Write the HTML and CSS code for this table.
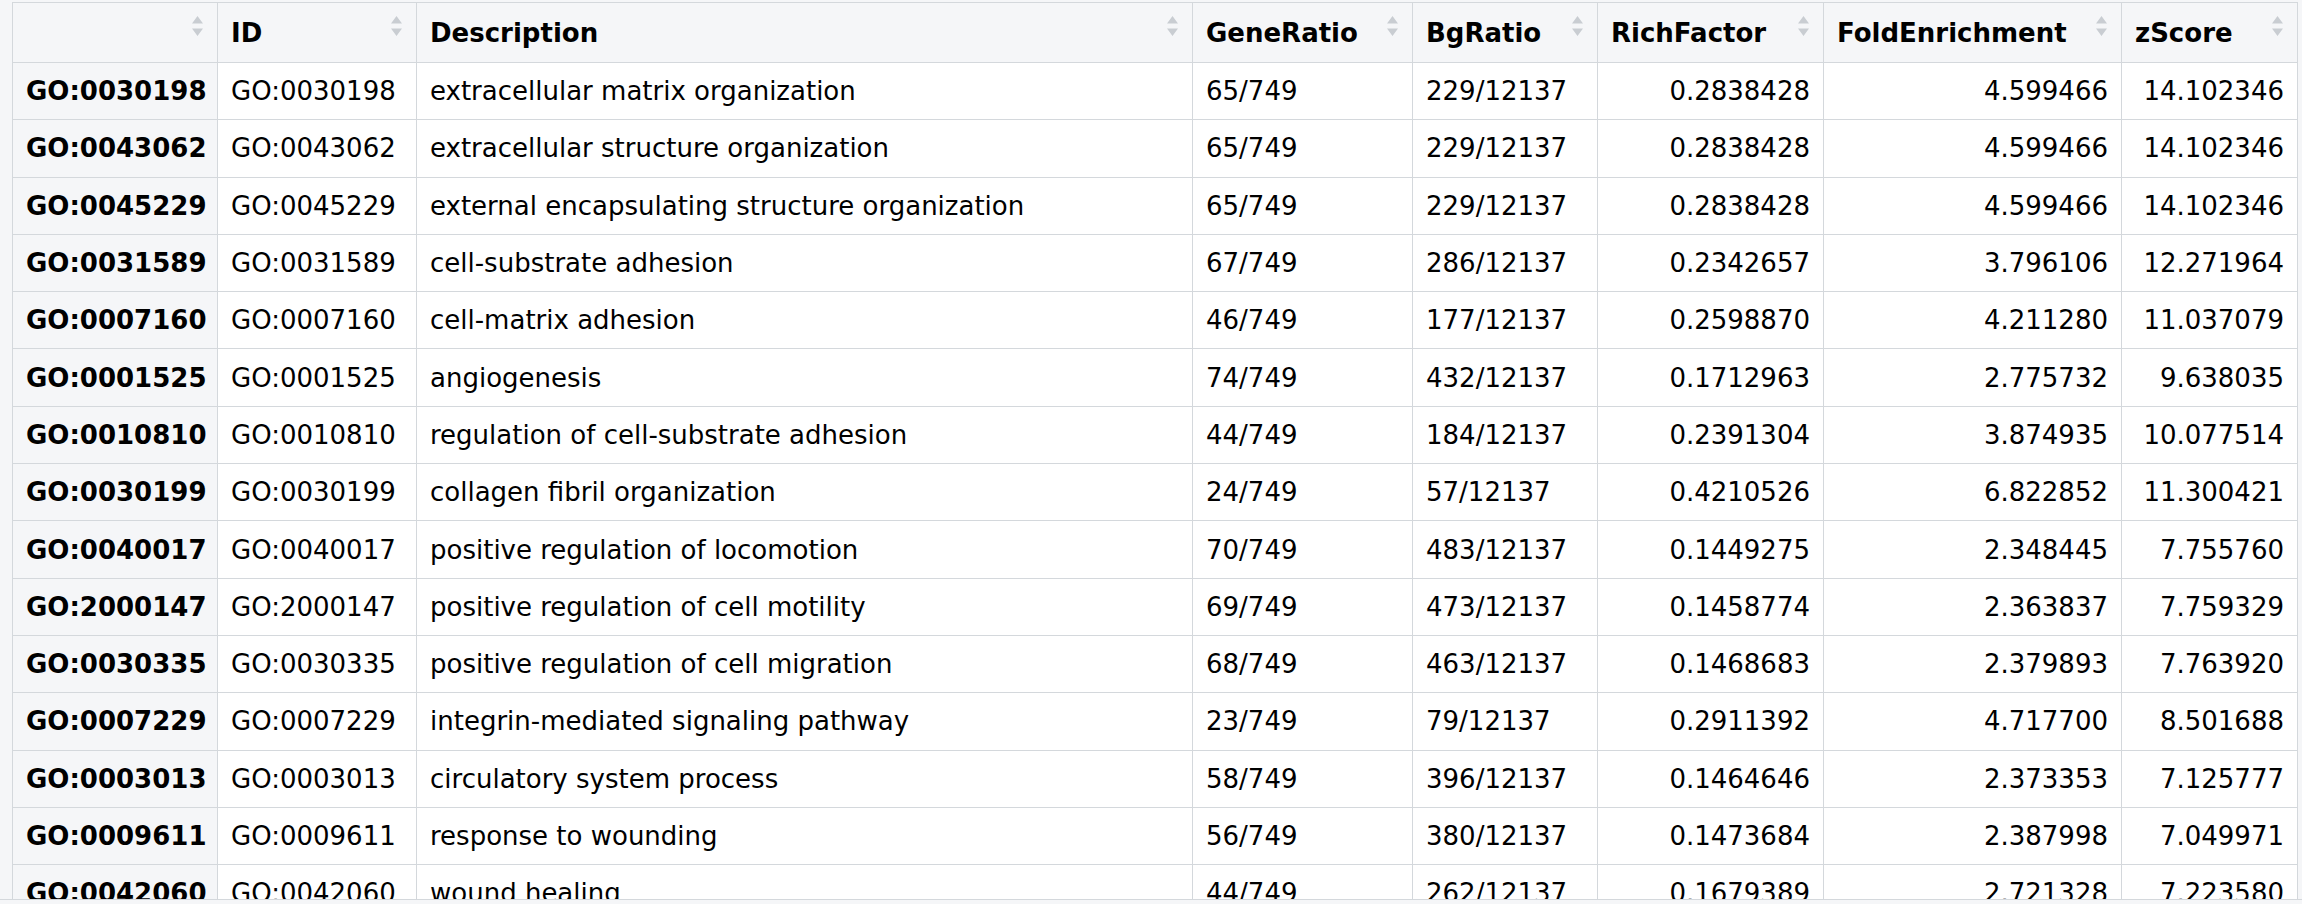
FILE: index.html
```html
<!DOCTYPE html>
<html>
<head>
<meta charset="utf-8">
<title>GO enrichment</title>
<link rel="stylesheet" href="styles.css">
</head>
<body>
<div class="viewer">
  <table class="grid">
    <thead>
      <tr>
        <th class="c-rn"><span class="sort"><svg viewBox="0 0 11 20" width="11" height="20"><path d="M0 7.5 L5.5 0 L11 7.5 Z M0 12.5 L5.5 20 L11 12.5 Z"/></svg></span></th>
        <th class="c-id">ID<span class="sort"><svg viewBox="0 0 11 20" width="11" height="20"><path d="M0 7.5 L5.5 0 L11 7.5 Z M0 12.5 L5.5 20 L11 12.5 Z"/></svg></span></th>
        <th class="c-desc">Description<span class="sort"><svg viewBox="0 0 11 20" width="11" height="20"><path d="M0 7.5 L5.5 0 L11 7.5 Z M0 12.5 L5.5 20 L11 12.5 Z"/></svg></span></th>
        <th class="c-gr">GeneRatio<span class="sort"><svg viewBox="0 0 11 20" width="11" height="20"><path d="M0 7.5 L5.5 0 L11 7.5 Z M0 12.5 L5.5 20 L11 12.5 Z"/></svg></span></th>
        <th class="c-bg">BgRatio<span class="sort"><svg viewBox="0 0 11 20" width="11" height="20"><path d="M0 7.5 L5.5 0 L11 7.5 Z M0 12.5 L5.5 20 L11 12.5 Z"/></svg></span></th>
        <th class="c-rf">RichFactor<span class="sort"><svg viewBox="0 0 11 20" width="11" height="20"><path d="M0 7.5 L5.5 0 L11 7.5 Z M0 12.5 L5.5 20 L11 12.5 Z"/></svg></span></th>
        <th class="c-fe">FoldEnrichment<span class="sort"><svg viewBox="0 0 11 20" width="11" height="20"><path d="M0 7.5 L5.5 0 L11 7.5 Z M0 12.5 L5.5 20 L11 12.5 Z"/></svg></span></th>
        <th class="c-z">zScore<span class="sort"><svg viewBox="0 0 11 20" width="11" height="20"><path d="M0 7.5 L5.5 0 L11 7.5 Z M0 12.5 L5.5 20 L11 12.5 Z"/></svg></span></th>
      </tr>
    </thead>
    <tbody>
      <tr><th class="rn">GO:0030198</th><td>GO:0030198</td><td>extracellular matrix organization</td><td>65/749</td><td>229/12137</td><td class="num">0.2838428</td><td class="num">4.599466</td><td class="num">14.102346</td></tr>
      <tr><th class="rn">GO:0043062</th><td>GO:0043062</td><td>extracellular structure organization</td><td>65/749</td><td>229/12137</td><td class="num">0.2838428</td><td class="num">4.599466</td><td class="num">14.102346</td></tr>
      <tr><th class="rn">GO:0045229</th><td>GO:0045229</td><td>external encapsulating structure organization</td><td>65/749</td><td>229/12137</td><td class="num">0.2838428</td><td class="num">4.599466</td><td class="num">14.102346</td></tr>
      <tr><th class="rn">GO:0031589</th><td>GO:0031589</td><td>cell-substrate adhesion</td><td>67/749</td><td>286/12137</td><td class="num">0.2342657</td><td class="num">3.796106</td><td class="num">12.271964</td></tr>
      <tr><th class="rn">GO:0007160</th><td>GO:0007160</td><td>cell-matrix adhesion</td><td>46/749</td><td>177/12137</td><td class="num">0.2598870</td><td class="num">4.211280</td><td class="num">11.037079</td></tr>
      <tr><th class="rn">GO:0001525</th><td>GO:0001525</td><td>angiogenesis</td><td>74/749</td><td>432/12137</td><td class="num">0.1712963</td><td class="num">2.775732</td><td class="num">9.638035</td></tr>
      <tr><th class="rn">GO:0010810</th><td>GO:0010810</td><td>regulation of cell-substrate adhesion</td><td>44/749</td><td>184/12137</td><td class="num">0.2391304</td><td class="num">3.874935</td><td class="num">10.077514</td></tr>
      <tr><th class="rn">GO:0030199</th><td>GO:0030199</td><td>collagen fibril organization</td><td>24/749</td><td>57/12137</td><td class="num">0.4210526</td><td class="num">6.822852</td><td class="num">11.300421</td></tr>
      <tr><th class="rn">GO:0040017</th><td>GO:0040017</td><td>positive regulation of locomotion</td><td>70/749</td><td>483/12137</td><td class="num">0.1449275</td><td class="num">2.348445</td><td class="num">7.755760</td></tr>
      <tr><th class="rn">GO:2000147</th><td>GO:2000147</td><td>positive regulation of cell motility</td><td>69/749</td><td>473/12137</td><td class="num">0.1458774</td><td class="num">2.363837</td><td class="num">7.759329</td></tr>
      <tr><th class="rn">GO:0030335</th><td>GO:0030335</td><td>positive regulation of cell migration</td><td>68/749</td><td>463/12137</td><td class="num">0.1468683</td><td class="num">2.379893</td><td class="num">7.763920</td></tr>
      <tr><th class="rn">GO:0007229</th><td>GO:0007229</td><td>integrin-mediated signaling pathway</td><td>23/749</td><td>79/12137</td><td class="num">0.2911392</td><td class="num">4.717700</td><td class="num">8.501688</td></tr>
      <tr><th class="rn">GO:0003013</th><td>GO:0003013</td><td>circulatory system process</td><td>58/749</td><td>396/12137</td><td class="num">0.1464646</td><td class="num">2.373353</td><td class="num">7.125777</td></tr>
      <tr><th class="rn">GO:0009611</th><td>GO:0009611</td><td>response to wounding</td><td>56/749</td><td>380/12137</td><td class="num">0.1473684</td><td class="num">2.387998</td><td class="num">7.049971</td></tr>
      <tr><th class="rn">GO:0042060</th><td>GO:0042060</td><td>wound healing</td><td>44/749</td><td>262/12137</td><td class="num">0.1679389</td><td class="num">2.721328</td><td class="num">7.223580</td></tr>
    </tbody>
  </table>
</div>
</body>
</html>
```

FILE: styles.css
```css
html, body {
  margin: 0;
  padding: 0;
  background: #f5f6f8;
}

body {
  font-family: "DejaVu Sans", "Liberation Sans", sans-serif;
  font-size: 26px;
  color: #000;
  height: 904px;
  overflow: hidden;
}

.viewer {
  height: 900px;
  overflow: hidden;
  border-bottom: 1px solid #d4d8dc;
  padding: 2px 0 0 12px;
  box-sizing: border-box;
}

.grid {
  border-collapse: separate;
  border-spacing: 0;
  table-layout: fixed;
  width: 2286px;
  border-left: 1px solid #d4d8dc;
  border-top: 1px solid #d4d8dc;
  background: #fff;
}

.grid th,
.grid td {
  box-sizing: border-box;
  border-right: 1px solid #d4d8dc;
  border-bottom: 1px solid #d4d8dc;
  padding: 0 13px;
  white-space: nowrap;
  overflow: hidden;
  text-align: left;
  vertical-align: middle;
}

.grid thead th {
  position: relative;
  height: 60px;
  background: #f5f6f8;
  font-weight: bold;
  padding-right: 34px;
}

.grid tbody td,
.grid tbody th {
  height: 57.3px;
  font-weight: normal;
}

.grid tbody th.rn {
  background: #f5f6f8;
  font-weight: bold;
}

.grid td.num {
  text-align: right;
}

.sort {
  position: absolute;
  right: 14px;
  top: 13px;
  width: 11px;
  height: 20px;
  display: block;
}

.sort svg {
  display: block;
  fill: #c9cdd2;
}

.c-rn { width: 205px; }
.c-id { width: 199px; }
.c-desc { width: 776px; }
.c-gr { width: 220px; }
.c-bg { width: 185px; }
.c-rf { width: 226px; }
.c-fe { width: 298px; }
.c-z { width: 176px; }
```
